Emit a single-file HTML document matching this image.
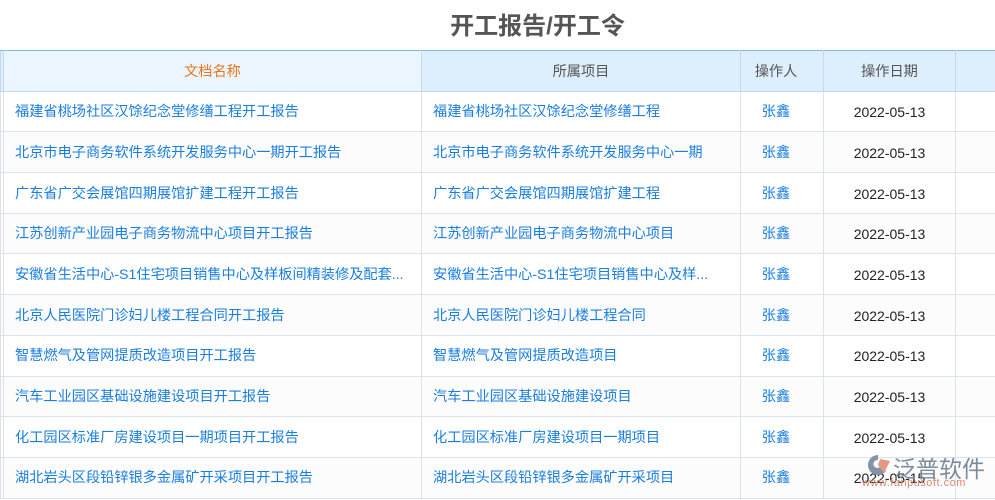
<!DOCTYPE html>
<html><head><meta charset="utf-8"><style>
body{margin:0;width:995px;height:500px;overflow:hidden;background:#fff;font-family:"Liberation Sans","Noto Sans CJK SC",sans-serif;position:relative}
.t{position:absolute;top:6px;left:0;width:1075px;text-align:center;font-size:24px;font-weight:bold;color:#555}
table{position:absolute;top:50px;left:0;border-collapse:collapse;table-layout:fixed;width:1000px}
td,th{border:1px solid #dde3ea;height:38.2px;padding:1.5px 0 0 0;font-size:14.2px;line-height:16px;font-weight:normal;white-space:nowrap;overflow:hidden;text-overflow:ellipsis;vertical-align:middle}
th{background:#ddeefc;color:#555;border-color:#c5d9ec;border-top:1px solid #7fb9e6}
th.f{background:#eaf5ff;color:#e8761a}
th.o{padding-right:12px}
td{color:#1a7ee0;padding-left:11px}
td.c{text-align:center;padding:1.5px 12px 0 0}
td.d{color:#222;text-align:center;padding:1.5px 0 0 0;font-size:14px}
tr:nth-child(odd) td{background:#fcfcfc}
.w{position:absolute;left:893px;top:450px;font-size:23px;color:#7d8ba0}
.w2{position:absolute;left:862px;top:477px;font-size:11px;color:#d58a6f;letter-spacing:0.5px}
</style></head><body>
<div class="t">开工报告/开工令</div>
<table>
<colgroup><col style="width:3px"><col style="width:418px"><col style="width:319px"><col style="width:83px"><col style="width:132px"><col style="width:45px"></colgroup>
<tr><th></th><th class="f">文档名称</th><th>所属项目</th><th class="o">操作人</th><th>操作日期</th><th></th></tr>
<tr><td></td><td>福建省桃场社区汉馀纪念堂修缮工程开工报告</td><td>福建省桃场社区汉馀纪念堂修缮工程</td><td class="c">张鑫</td><td class="d">2022-05-13</td><td></td></tr>
<tr><td></td><td>北京市电子商务软件系统开发服务中心一期开工报告</td><td>北京市电子商务软件系统开发服务中心一期</td><td class="c">张鑫</td><td class="d">2022-05-13</td><td></td></tr>
<tr><td></td><td>广东省广交会展馆四期展馆扩建工程开工报告</td><td>广东省广交会展馆四期展馆扩建工程</td><td class="c">张鑫</td><td class="d">2022-05-13</td><td></td></tr>
<tr><td></td><td>江苏创新产业园电子商务物流中心项目开工报告</td><td>江苏创新产业园电子商务物流中心项目</td><td class="c">张鑫</td><td class="d">2022-05-13</td><td></td></tr>
<tr><td></td><td>安徽省生活中心-S1住宅项目销售中心及样板间精装修及配套...</td><td>安徽省生活中心-S1住宅项目销售中心及样...</td><td class="c">张鑫</td><td class="d">2022-05-13</td><td></td></tr>
<tr><td></td><td>北京人民医院门诊妇儿楼工程合同开工报告</td><td>北京人民医院门诊妇儿楼工程合同</td><td class="c">张鑫</td><td class="d">2022-05-13</td><td></td></tr>
<tr><td></td><td>智慧燃气及管网提质改造项目开工报告</td><td>智慧燃气及管网提质改造项目</td><td class="c">张鑫</td><td class="d">2022-05-13</td><td></td></tr>
<tr><td></td><td>汽车工业园区基础设施建设项目开工报告</td><td>汽车工业园区基础设施建设项目</td><td class="c">张鑫</td><td class="d">2022-05-13</td><td></td></tr>
<tr><td></td><td>化工园区标准厂房建设项目一期项目开工报告</td><td>化工园区标准厂房建设项目一期项目</td><td class="c">张鑫</td><td class="d">2022-05-13</td><td></td></tr>
<tr><td></td><td>湖北岩头区段铅锌银多金属矿开采项目开工报告</td><td>湖北岩头区段铅锌银多金属矿开采项目</td><td class="c">张鑫</td><td class="d">2022-05-15</td><td></td></tr>
</table>
<svg style="position:absolute;left:864px;top:453px" width="28" height="24" viewBox="0 0 28 24"><path d="M14 2 A10 10 0 1 0 22 18 L16 14 A4 4 0 1 1 14 7Z" fill="#8593a8"/><path d="M16 6 L26 8 L20 20 L14 12Z" fill="#e39a80"/></svg>
<div class="w">泛普软件</div>
<div class="w2">www.fanpusoft.com</div>
</body></html>
